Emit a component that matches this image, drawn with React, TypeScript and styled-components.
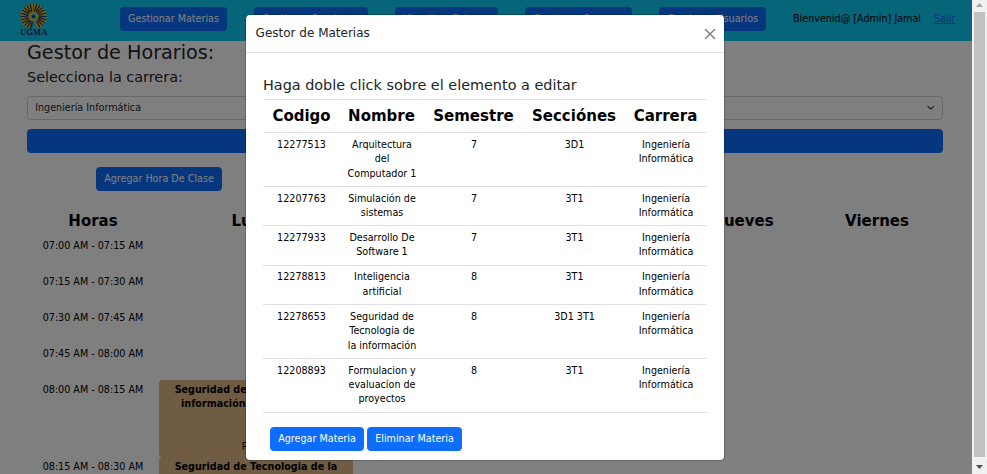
import React from 'react';
import styled, { createGlobalStyle } from 'styled-components';

const GlobalStyle = createGlobalStyle`
  *, *::before, *::after { box-sizing: border-box; }
  html { font-size: 9.6px; }
  body { margin: 0; background: #fff; color: #212529; overflow: hidden;
    font-family: "DejaVu Sans", sans-serif; font-size: 1rem; line-height: 1.5; }
`;

const Screen = styled.div`
  display: grid;
  grid-template-columns: 972px 15px;
  height: 474px;
  overflow: hidden;
`;

const Page = styled.div`
  position: relative;
  height: 474px;
  overflow: hidden;
`;

const Navbar = styled.nav`
  display: flex;
  align-items: center;
  height: 41px;
  padding: 0 17px 3px 17px;
  background: #0dcaf0;
`;

const Logo = styled.svg`
  width: 34px;
  height: 36px;
  margin: 2px 69px 0 0;
  flex: none;
`;

const NavLinks = styled.div`
  display: flex;
  gap: 27px;
`;

const Button = styled.button<{ $width?: number }>`
  height: 24px;
  width: ${p => (p.$width ? `${p.$width}px` : 'auto')};
  padding: 3px 7px;
  border: 1px solid #0d6efd;
  border-radius: 3.6px;
  background: #0d6efd;
  color: #fff;
  font: inherit;
  line-height: 14.4px;
  white-space: nowrap;
`;

const Welcome = styled.span`
  margin-left: 27px;
  color: #000;
  white-space: nowrap;
`;

const Logout = styled.a`
  margin-left: 13px;
  color: #0d6efd;
  text-decoration: underline;
`;

const Main = styled.main`
  padding: 0 29px 0 27px;
`;

const Title = styled.h1`
  margin: 0;
  font-size: 19.2px;
  line-height: 23px;
  font-weight: 500;
`;

const Subtitle = styled.h2`
  margin: 5px 0 10px;
  font-size: 14.4px;
  line-height: 17px;
  font-weight: 500;
`;

const Select = styled.div`
  display: flex;
  align-items: center;
  justify-content: space-between;
  height: 24px;
  padding: 0 8px 0 7.2px;
  border: 1px solid #ced4da;
  border-radius: 3.6px;
`;

const WideButton = styled(Button)`
  display: block;
  width: 100%;
  margin: 9px 0 14px;
`;

const AddSlot = styled.div`
  display: flex;
  padding-left: 69px;
`;

const Schedule = styled.div`
  display: grid;
  grid-template-columns: 132px 195px 163px 164px 130px 132px;
  margin-top: 19px;
  color: #000;
  text-align: center;
`;

const Day = styled.div`
  height: 25px;
  font-size: 15px;
  line-height: 22px;
  font-weight: 700;
`;

const Hour = styled.div<{ $height: number }>`
  height: ${p => p.$height}px;
  padding-top: 4px;
`;

const DayCell = styled.div<{ $height: number }>`
  grid-column: span 5;
  height: ${p => p.$height}px;
`;

const ClassCard = styled.div`
  display: flex;
  flex-direction: column;
  justify-content: space-between;
  width: 194px;
  height: 77px;
  margin-top: 1px;
  padding: 3px 9px;
  border-radius: 3.6px;
  background: #deb887;
`;

const Backdrop = styled.div`
  position: absolute;
  inset: 0;
  display: flex;
  justify-content: center;
  align-items: flex-start;
  background: rgba(0, 0, 0, 0.5);
`;

const Dialog = styled.section`
  width: 480px;
  height: 447px;
  margin: 14px 0 0 -2px;
  border: 1px solid rgba(0, 0, 0, 0.2);
  border-radius: 4.8px;
  background: #fff;
  background-clip: padding-box;
`;

const DialogHeader = styled.header`
  display: flex;
  align-items: center;
  justify-content: space-between;
  height: 38px;
  padding: 0 8px 0 9.6px;
  border-bottom: 1px solid #dee2e6;
`;

const DialogTitle = styled.h5`
  margin: 0 0 1px;
  font-size: 12px;
  line-height: 18px;
  font-weight: 500;
`;

const DialogBody = styled.div`
  padding: 24px 17px 0;
`;

const Hint = styled.h4`
  margin: 0 0 4.8px;
  font-size: 14.4px;
  line-height: 17.3px;
  font-weight: 500;
`;

const Table = styled.table`
  width: 444px;
  table-layout: fixed;
  border-collapse: separate;
  border-spacing: 0;
  text-align: center;
  color: #000;
`;

const HeadCell = styled.th`
  height: 34px;
  padding: 0;
  border-top: 1px solid #dee2e6;
  border-bottom: 1px solid #dee2e6;
  border-right: 1px solid #fff;
  font-size: 15px;
  line-height: 22px;
  &:first-child { border-left: 1px solid #fff; }
`;

const Cell = styled.td`
  padding: 4.8px;
  vertical-align: top;
  border-bottom: 1px solid #dee2e6;
`;

const Actions = styled.div`
  display: flex;
  gap: 3px;
  margin: 14.4px 0 0 7px;
`;

const Scrollbar = styled.div`
  display: flex;
  flex-direction: column;
  align-items: center;
  background: #f1f1f1;
`;

const ScrollThumb = styled.div`
  width: 11px;
  height: 445px;
  background: #c1c1c1;
`;

const nav: [string, number][] = [
  ['Gestionar Materias', 107],
  ['Gestionar Secciones', 114],
  ['Visualizar Salones', 103],
  ['Gestionar Carreras', 107],
  ['Gestionar Usuarios', 107],
];

const columns: [string, number][] = [
  ['Codigo', 77],
  ['Nombre', 84],
  ['Semestre', 100],
  ['Secciónes', 101],
  ['Carrera', 82],
];

const subjects = [
  ['12277513', 'Arquitectura del Computador 1', '7', '3D1'],
  ['12207763', 'Simulación de sistemas', '7', '3T1'],
  ['12277933', 'Desarrollo De Software 1', '7', '3T1'],
  ['12278813', 'Inteligencia artificial', '8', '3T1'],
  ['12278653', 'Seguridad de Tecnologia de la información', '8', '3D1 3T1'],
  ['12208893', 'Formulacion y evaluacíon de proyectos', '8', '3T1'],
];

const hours: [string, number][] = [
  ['07:00 AM - 07:15 AM', 36],
  ['07:15 AM - 07:30 AM', 36],
  ['07:30 AM - 07:45 AM', 36],
  ['07:45 AM - 08:00 AM', 36],
  ['08:00 AM - 08:15 AM', 77.4],
  ['08:15 AM - 08:30 AM', 77.4],
];

const rays = Array.from({ length: 24 }, (_, i) => i * 15 + 7.5).filter(a => a < 160 || a > 200);

function UniversityLogo() {
  return (
    <Logo viewBox="0 0 34 36">
      <g transform="translate(16.5 14.5)">
        {rays.map(a => (
          <g key={a} transform={`rotate(${a})`}>
            <path d="M-.6-4 L-1.5-12 Q0-14.5 1.5-12 L.6-4Z" fill="#e5b532" />
            <path d="M-1.1-5 L-1.7-12.6" stroke="#152c50" strokeWidth="1.1" />
          </g>
        ))}
        <circle r="4.8" fill="#e5b532" />
        <circle r="2.8" fill="#0dcaf0" />
        <circle r="1.5" fill="#102b66" />
      </g>
      <text x="16.8" y="32.5" textAnchor="middle" textLength="27" fontFamily="Liberation Serif, serif" fontSize="8.5" fontWeight="700" fill="#102b66">UGMA</text>
    </Logo>
  );
}

export default function App() {
  return (
    <Screen>
      <GlobalStyle />
      <Page>
        <Navbar>
          <UniversityLogo />
          <NavLinks>
            {nav.map(([label, width]) => <Button key={label} $width={width}>{label}</Button>)}
          </NavLinks>
          <Welcome>Bienvenid@ [Admin] Jamal</Welcome>
          <Logout>Salir</Logout>
        </Navbar>
        <Main>
          <Title>Gestor de Horarios:</Title>
          <Subtitle>Selecciona la carrera:</Subtitle>
          <Select>
            Ingeniería Informática
            <svg width="7.5" height="7.5" viewBox="0 0 16 16" fill="none" stroke="#343a40" strokeWidth="2.6" strokeLinecap="round" strokeLinejoin="round"><path d="m2 5 6 6 6-6" /></svg>
          </Select>
          <WideButton />
          <AddSlot><Button $width={126}>Agregar Hora De Clase</Button></AddSlot>
          <Schedule>
            {['Horas', 'Lunes', 'Martes', 'Miercoles', 'Jueves', 'Viernes'].map(d => <Day key={d}>{d}</Day>)}
            {hours.map(([label, height], i) => (
              <React.Fragment key={label}>
                <Hour $height={height}>{label}</Hour>
                <DayCell $height={height}>
                  {i > 3 && (
                    <ClassCard>
                      <b>Seguridad de Tecnologia de la información, Secciones 3D1</b>
                      <span>Piso 1</span>
                    </ClassCard>
                  )}
                </DayCell>
              </React.Fragment>
            ))}
          </Schedule>
        </Main>
        <Backdrop>
          <Dialog>
            <DialogHeader>
              <DialogTitle>Gestor de Materias</DialogTitle>
              <svg width="12" height="12" viewBox="0 0 12 12" stroke="#7f7f7f" strokeWidth="1.4" strokeLinecap="round"><path d="m1.4 1.4 9.2 9.2m0-9.2-9.2 9.2" /></svg>
            </DialogHeader>
            <DialogBody>
              <Hint>Haga doble click sobre el elemento a editar</Hint>
              <Table>
                <colgroup>{columns.map(([c, w]) => <col key={c} width={w} />)}</colgroup>
                <thead><tr>{columns.map(([c]) => <HeadCell key={c}>{c}</HeadCell>)}</tr></thead>
                <tbody>
                  {subjects.map(row => (
                    <tr key={row[0]}>
                      {row.map((v, i) => <Cell key={i}>{v}</Cell>)}
                      <Cell>Ingeniería Informática</Cell>
                    </tr>
                  ))}
                </tbody>
              </Table>
              <Actions>
                <Button $width={94}>Agregar Materia</Button>
                <Button $width={95}>Eliminar Materia</Button>
              </Actions>
            </DialogBody>
          </Dialog>
        </Backdrop>
      </Page>
      <Scrollbar>
        <svg width="15" height="12" viewBox="0 0 15 12"><path d="M4 7 7.5 3 11 7Z" fill="#a3a3a3" /></svg>
        <ScrollThumb />
        <svg width="15" height="17" viewBox="0 0 15 17"><path d="M4 8h7l-3.5 4Z" fill="#505050" /></svg>
      </Scrollbar>
    </Screen>
  );
}
